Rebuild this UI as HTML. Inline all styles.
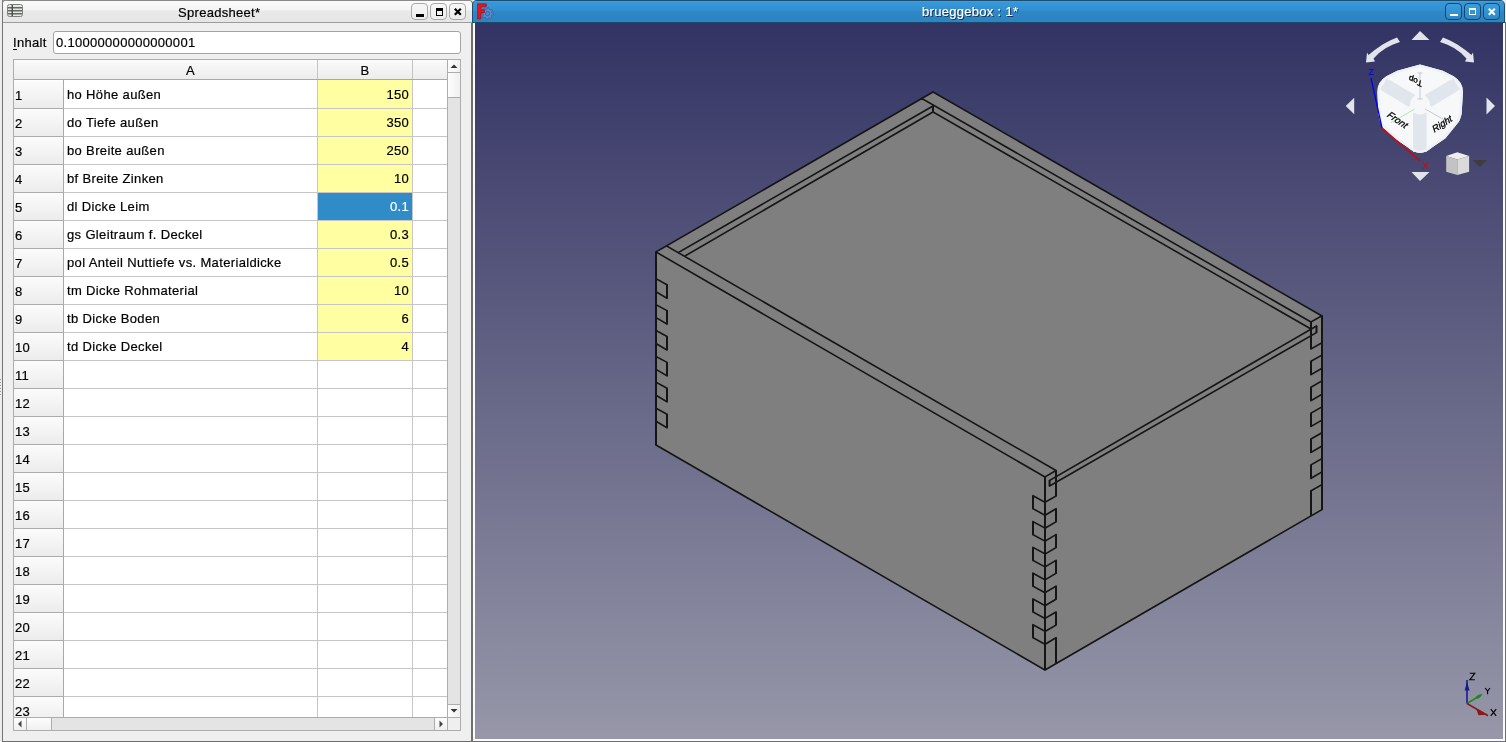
<!DOCTYPE html>
<html><head><meta charset="utf-8">
<style>
*{box-sizing:border-box}
html,body{margin:0;padding:0;width:1506px;height:742px;overflow:hidden;background:#ececec;font-family:"Liberation Sans",sans-serif;font-size:13px;letter-spacing:0.3px;color:#000}
.abs{position:absolute}
.ta,.rh,.yel,.sel,.ttl,.hdr{will-change:transform;-webkit-text-stroke:0.2px currentColor}
#sw{position:absolute;left:2px;top:0;width:471px;height:742px;background:#efefef;border-left:1px solid #747474;border-right:2px solid #6f6f6f;border-top:1px solid #8a8a8a;border-bottom:1px solid #6e6e6e;border-radius:4px 4px 0 0}
#stb{position:absolute;left:3px;top:1px;width:469px;height:22px;background:linear-gradient(#fbfbfb 0,#f4f4f4 9px,#e9e9e9 10px,#e6e6e6 100%);border-bottom:1px solid #9c9c9c;border-radius:3px 3px 0 0}
.ttl{position:absolute;white-space:pre}
.wbtn{position:absolute;top:3px;width:17px;height:17px;border:1px solid #a9a9a9;border-radius:4px;background:linear-gradient(#f7f7f7,#ececec)}
#inp{position:absolute;left:53px;top:31px;width:408px;height:23px;background:#fff;border:1px solid #a4a4a4;border-radius:3px}
#tbl{position:absolute;left:13px;top:59px;width:448px;height:672px;border:1px solid #adadad;background:#fff;overflow:hidden}
.hdr{position:absolute;top:60px;height:19px;background:linear-gradient(#fbfbfb,#ececec);text-align:center;line-height:19px;padding-top:1px}
.rh{position:absolute;left:14px;width:49px;height:28px;background:linear-gradient(#fbfbfb,#ececec);padding-left:1px;padding-top:8px;line-height:13px;border-top:1px solid #fdfdfd}
.hl{position:absolute;left:64px;width:383px;height:1px;background:#c6c6c6}.hl::before{content:'';position:absolute;left:-50px;top:0;width:50px;height:1px;background:#acacac}
.ta{position:absolute;left:67px;letter-spacing:0.35px;height:27px;padding-top:8px;line-height:13px;white-space:pre}
.yel,.sel{position:absolute;left:318px;width:94px;height:28px;background:#ffffa2;text-align:right;padding-right:3px;padding-top:8px;line-height:13px}
.sel{background:#308cc6;color:#fff}
.vl{position:absolute;top:60px;width:1px;height:657px;background:#c6c6c6}
</style></head><body>
<div class="abs grip" style="left:0;top:379px;width:1px;height:1px;background:#9a9a9a"></div><div class="abs grip" style="left:0;top:382px;width:1px;height:1px;background:#9a9a9a"></div><div class="abs grip" style="left:0;top:385px;width:1px;height:1px;background:#9a9a9a"></div><div class="abs grip" style="left:0;top:388px;width:1px;height:1px;background:#9a9a9a"></div><div class="abs grip" style="left:0;top:391px;width:1px;height:1px;background:#9a9a9a"></div><div class="abs grip" style="left:0;top:394px;width:1px;height:1px;background:#9a9a9a"></div>
<div class="abs cornerfix" style="left:2px;top:0;width:5px;height:5px;background:#8c8c8c"></div>
<div id="sw"></div>
<div id="stb"></div>
<!-- sheet icon -->
<svg class="abs" style="left:6px;top:3px" width="18" height="16" viewBox="0 0 18 16">
<rect x="1.5" y="1.5" width="15" height="12" rx="2" fill="#e6e8e4" stroke="#7d817d" stroke-width="1"/>
<rect x="2" y="4" width="14" height="1.5" fill="#646864"/>
<rect x="2" y="7" width="14" height="1.5" fill="#646864"/>
<rect x="2" y="10" width="14" height="1.5" fill="#646864"/>
<rect x="5.5" y="2" width="1.5" height="11" fill="#4e524e"/>
</svg>
<div class="ttl" style="left:178px;top:5px;font-size:13px;line-height:16px">Spreadsheet*</div>
<div class="wbtn" style="left:411px"><div class="abs" style="left:4px;top:10px;width:8px;height:3px;background:#000"></div></div>
<div class="wbtn" style="left:430px"><div class="abs" style="left:5px;top:4px;width:7px;height:8px;border:1px solid #000;border-top-width:3px;border-bottom-width:1.5px"></div></div>
<div class="wbtn" style="left:449px"><svg class="abs" style="left:3px;top:3px" width="10" height="10"><path d="M1.8 1.8L7.8 7.8M7.8 1.8L1.8 7.8" stroke="#000" stroke-width="2.2"/></svg></div>
<div class="ttl" style="left:13px;top:35px;line-height:16px">Inhalt</div>
<div class="abs" style="left:13px;top:49px;width:4px;height:1px;background:#000"></div>
<div id="inp"><div class="ttl" style="left:2px;top:3px;line-height:16px">0.10000000000000001</div></div>
<div id="tbl"></div>
<div class="hdr" style="left:14px;width:303px;padding-left:50px">A</div>
<div class="hdr" style="left:318px;width:94px">B</div>
<div class="hdr" style="left:413px;width:34px"></div>
<div class="abs" style="left:14px;top:79px;width:433px;height:1px;background:#a9a9a9"></div>
<div class="abs" style="left:317px;top:60px;width:1px;height:19px;background:#c4c4c4"></div>
<div class="abs" style="left:412px;top:60px;width:1px;height:19px;background:#c4c4c4"></div>
<div class="rh" style="top:80px">1</div>
<div class="ta" style="top:80px">ho Höhe außen</div>
<div class="yel" style="top:80px">150</div>
<div class="rh" style="top:108px">2</div>
<div class="ta" style="top:108px">do Tiefe außen</div>
<div class="yel" style="top:108px">350</div>
<div class="rh" style="top:136px">3</div>
<div class="ta" style="top:136px">bo Breite außen</div>
<div class="yel" style="top:136px">250</div>
<div class="rh" style="top:164px">4</div>
<div class="ta" style="top:164px">bf Breite Zinken</div>
<div class="yel" style="top:164px">10</div>
<div class="rh" style="top:192px">5</div>
<div class="ta" style="top:192px">dl Dicke Leim</div>
<div class="sel" style="top:192px">0.1</div>
<div class="rh" style="top:220px">6</div>
<div class="ta" style="top:220px">gs Gleitraum f. Deckel</div>
<div class="yel" style="top:220px">0.3</div>
<div class="rh" style="top:248px">7</div>
<div class="ta" style="top:248px">pol Anteil Nuttiefe vs. Materialdicke</div>
<div class="yel" style="top:248px">0.5</div>
<div class="rh" style="top:276px">8</div>
<div class="ta" style="top:276px">tm Dicke Rohmaterial</div>
<div class="yel" style="top:276px">10</div>
<div class="rh" style="top:304px">9</div>
<div class="ta" style="top:304px">tb Dicke Boden</div>
<div class="yel" style="top:304px">6</div>
<div class="rh" style="top:332px">10</div>
<div class="ta" style="top:332px">td Dicke Deckel</div>
<div class="yel" style="top:332px">4</div>
<div class="rh" style="top:360px">11</div>
<div class="rh" style="top:388px">12</div>
<div class="rh" style="top:416px">13</div>
<div class="rh" style="top:444px">14</div>
<div class="rh" style="top:472px">15</div>
<div class="rh" style="top:500px">16</div>
<div class="rh" style="top:528px">17</div>
<div class="rh" style="top:556px">18</div>
<div class="rh" style="top:584px">19</div>
<div class="rh" style="top:612px">20</div>
<div class="rh" style="top:640px">21</div>
<div class="rh" style="top:668px">22</div>
<div class="rh" style="top:696px">23</div>
<div class="hl" style="top:108px"></div>
<div class="hl" style="top:136px"></div>
<div class="hl" style="top:164px"></div>
<div class="hl" style="top:192px"></div>
<div class="hl" style="top:220px"></div>
<div class="hl" style="top:248px"></div>
<div class="hl" style="top:276px"></div>
<div class="hl" style="top:304px"></div>
<div class="hl" style="top:332px"></div>
<div class="hl" style="top:360px"></div>
<div class="hl" style="top:388px"></div>
<div class="hl" style="top:416px"></div>
<div class="hl" style="top:444px"></div>
<div class="hl" style="top:472px"></div>
<div class="hl" style="top:500px"></div>
<div class="hl" style="top:528px"></div>
<div class="hl" style="top:556px"></div>
<div class="hl" style="top:584px"></div>
<div class="hl" style="top:612px"></div>
<div class="hl" style="top:640px"></div>
<div class="hl" style="top:668px"></div>
<div class="hl" style="top:696px"></div>
<div class="hl" style="top:724px"></div><div class="abs" style="left:63px;top:80px;width:1px;height:637px;background:#a9a9a9"></div>
<div class="vl" style="left:317px;top:80px;height:637px"></div>
<div class="vl" style="left:412px;top:80px;height:637px"></div>
<!-- v scrollbar -->
<div class="abs" style="left:447px;top:59px;width:14px;height:659px;background:#e4e4e4;border:1px solid #adadad"></div>
<div class="abs" style="left:447px;top:59px;width:14px;height:14px;background:linear-gradient(90deg,#fdfdfd,#f0f0f0);border:1px solid #adadad"></div>
<svg class="abs" style="left:448px;top:60px" width="12" height="12"><path d="M2.5 8L6 4.5L9.5 8Z" fill="#333"/></svg>
<div class="abs" style="left:447px;top:72px;width:14px;height:26px;background:linear-gradient(90deg,#fdfdfd,#f0f0f0);border:1px solid #adadad"></div>
<div class="abs" style="left:447px;top:704px;width:14px;height:14px;background:linear-gradient(90deg,#fdfdfd,#f0f0f0);border:1px solid #adadad"></div>
<svg class="abs" style="left:448px;top:705px" width="12" height="12"><path d="M2.5 4L6 7.5L9.5 4Z" fill="#333"/></svg>
<!-- h scrollbar -->
<div class="abs" style="left:13px;top:717px;width:448px;height:14px;background:#e4e4e4;border:1px solid #adadad"></div>
<div class="abs" style="left:13px;top:717px;width:14px;height:14px;background:linear-gradient(#fdfdfd,#f0f0f0);border:1px solid #adadad"></div>
<svg class="abs" style="left:14px;top:718px" width="12" height="12"><path d="M7.5 2.5L4 6L7.5 9.5Z" fill="#444"/></svg>
<div class="abs" style="left:26px;top:717px;width:26px;height:14px;background:linear-gradient(#fdfdfd,#f0f0f0);border:1px solid #adadad"></div>
<div class="abs" style="left:434px;top:717px;width:14px;height:14px;background:linear-gradient(#fdfdfd,#f0f0f0);border:1px solid #adadad"></div>
<svg class="abs" style="left:435px;top:718px" width="12" height="12"><path d="M4.5 2.5L8 6L4.5 9.5Z" fill="#444"/></svg>
<div class="abs" style="left:447px;top:717px;width:14px;height:14px;background:#efefef;border:1px solid #adadad"></div>
<!-- 3D window -->
<div class="abs" style="left:473px;top:0;width:1033px;height:742px;background:#ececec"></div>
<div class="abs" style="left:473px;top:22px;width:1033px;height:720px;background:#fbfbfb;border-right:1px solid #6e6e6e;border-bottom:1px solid #6e6e6e"></div>
<div class="abs" style="left:472px;top:0;width:1033px;height:23px;border-radius:5px 5px 0 0;border-left:1px solid #1d4d70;border-right:1px solid #1d4d70;background:linear-gradient(#1d4d70 0,#1d4d70 1px,#3eaaf0 1px,#3598da 2px,#3290d2 10px,#2e86c4 12px,#2d84c2 22px,#1a4a6c 22px)"></div>
<div class="abs" style="left:475px;top:23px;width:1028px;height:716px;background:linear-gradient(#333364,#9797a9)"></div>
<div class="ttl" style="left:923px;top:5px;line-height:16px;color:#1b3550">brueggebox : 1*</div>
<div class="ttl" style="left:922px;top:4px;line-height:16px;color:#fff">brueggebox : 1*</div>
<svg class="abs" style="left:0;top:0" width="1506" height="742" viewBox="0 0 1506 742">
<polygon points="656.0,252.0 933.0,92.0 1322.0,316.0 1322.0,509.5 1045.0,670.0 656.0,445.0" fill="#7f7f7f"/>
<path d="M656.0,252.0 L933.0,92.0 M933.0,92.0 L1322.0,316.0 M1322.0,509.5 L1045.0,670.0 M1045.0,670.0 L656.0,445.0 M656.0,252.0 L1045.0,477.0 M667.0,246.2 L1056.0,470.5 M1045.0,477.0 L1056.0,470.5 M1056.0,496.0 L1045.0,502.3 M679.0,252.2 L933.0,106.0 M685.0,256.0 L933.0,112.0 M921.8,98.5 L1311.0,322.0 M1311.0,322.0 L1322.0,315.8 M933.0,112.0 L1311.0,329.0 M1311.0,349.0 L1322.0,342.7 M1049.6,480.5 L1316.5,326.0 M1316.5,332.5 L1049.6,486.0 M656.0,278.7 L667.0,284.7 M667.0,298.2 L656.0,291.7 M656.0,304.6 L667.0,310.6 M667.0,324.1 L656.0,317.6 M656.0,330.5 L667.0,336.5 M667.0,350.0 L656.0,343.5 M656.0,356.4 L667.0,362.4 M667.0,375.9 L656.0,369.4 M656.0,382.3 L667.0,388.3 M667.0,401.8 L656.0,395.3 M656.0,408.2 L667.0,414.2 M667.0,427.7 L656.0,421.2 M1045.0,502.3 L1033.0,495.8 M1033.0,508.8 L1045.0,515.3 M1045.0,528.1 L1033.0,521.6 M1033.0,534.6 L1045.0,541.1 M1045.0,553.9 L1033.0,547.4 M1033.0,560.4 L1045.0,566.9 M1045.0,579.7 L1033.0,573.2 M1033.0,586.2 L1045.0,592.7 M1045.0,605.5 L1033.0,599.0 M1033.0,612.0 L1045.0,618.5 M1045.0,631.3 L1033.0,624.8 M1033.0,637.8 L1045.0,644.3 M1045.0,515.3 L1056.0,508.8 M1056.0,521.8 L1045.0,528.3 M1045.0,541.1 L1056.0,534.6 M1056.0,547.6 L1045.0,554.1 M1045.0,566.9 L1056.0,560.4 M1056.0,573.4 L1045.0,579.9 M1045.0,592.7 L1056.0,586.2 M1056.0,599.2 L1045.0,605.7 M1045.0,618.5 L1056.0,612.0 M1056.0,625.0 L1045.0,631.5 M1045.0,644.3 L1056.0,637.8 M1322.0,355.0 L1311.0,361.3 M1311.0,374.7 L1322.0,368.3 M1322.0,380.9 L1311.0,387.2 M1311.0,400.6 L1322.0,394.2 M1322.0,406.8 L1311.0,413.1 M1311.0,426.5 L1322.0,420.1 M1322.0,432.7 L1311.0,439.0 M1311.0,452.4 L1322.0,446.0 M1322.0,458.6 L1311.0,464.9 M1311.0,478.3 L1322.0,471.9 M1322.0,484.5 L1311.0,490.8" fill="none" stroke="#151515" stroke-width="1.6" stroke-linecap="square"/>
<path d="M656.0,445.0 L656.0,252.0 M1322.0,316.0 L1322.0,509.5 M1045.0,477.0 L1045.0,670.0 M1056.0,470.5 L1056.0,496.0 M933.0,106.0 L933.0,112.0 M1311.0,322.0 L1311.0,349.0 M1049.6,486.0 L1049.6,480.5 M1316.5,326.0 L1316.5,332.5 M667.0,284.7 L667.0,298.2 M667.0,310.6 L667.0,324.1 M667.0,336.5 L667.0,350.0 M667.0,362.4 L667.0,375.9 M667.0,388.3 L667.0,401.8 M667.0,414.2 L667.0,427.7 M1033.0,495.8 L1033.0,508.8 M1033.0,521.6 L1033.0,534.6 M1033.0,547.4 L1033.0,560.4 M1033.0,573.2 L1033.0,586.2 M1033.0,599.0 L1033.0,612.0 M1033.0,624.8 L1033.0,637.8 M1056.0,508.8 L1056.0,521.8 M1056.0,534.6 L1056.0,547.6 M1056.0,560.4 L1056.0,573.4 M1056.0,586.2 L1056.0,599.2 M1056.0,612.0 L1056.0,625.0 M1056.0,637.8 L1056.0,663.6 M1311.0,361.3 L1311.0,374.7 M1311.0,387.2 L1311.0,400.6 M1311.0,413.1 L1311.0,426.5 M1311.0,439.0 L1311.0,452.4 M1311.0,464.9 L1311.0,478.3 M1311.0,490.8 L1311.0,516.0" fill="none" stroke="#151515" stroke-width="2" stroke-linecap="butt"/>
</svg><svg class="abs" style="left:1330px;top:24px" width="176" height="170" viewBox="1330 24 176 170">
<g fill="#e1e5eb">
<polygon points="1420,31 1411.5,40 1429.5,40"/>
<polygon points="1420,181 1411.5,172 1429.5,172"/>
<polygon points="1345.7,106 1354.2,97.8 1354.2,114.3"/>
<polygon points="1495,106 1486.5,97.4 1486.5,114.6"/>
<polygon points="1397,37.5 1390,40.5 1382.6,44.5 1374,50.5 1368.5,55 1367,52.5 1366,62.5 1375,61.5 1373.5,58.5 1379,53 1386,48 1393,44.5 1400,42"/>
<polygon points="1443,37.5 1450,40.5 1457.4,44.5 1466,50.5 1471.5,55 1473,52.5 1474,62.5 1465,61.5 1466.5,58.5 1461,53 1454,48 1447,44.5 1440,42"/>
</g>
<!-- cube body -->
<path d="M1420,64.5 L1442.8,70.8 L1453.6,76.2 Q1463,82 1463,92 L1461.6,114 Q1460,121 1457.6,123.3 L1445.5,138.2 L1432,147.6 Q1426,153 1420,153 Q1414,153 1408,147.6 L1394.5,138.2 L1382.8,127.4 Q1379.5,122 1378.4,114 L1377.4,92 Q1377,82 1386.4,76.2 L1397.2,70.8 Z" fill="#f7f8fa"/>
<polygon points="1386.8,78.2 1415,95 1409,107 1380,89.6" fill="#e1e6ec"/>
<polygon points="1453.2,78.2 1425,95 1431,107 1460,89.6" fill="#e1e6ec"/>
<rect x="1413" y="113" width="13.6" height="39" fill="#e1e6ec"/>
<circle cx="1420" cy="104.5" r="10" fill="#f6f7f9"/>
<path d="M1420,64.5 L1442.8,70.8 L1453.6,76.2 Q1463,82 1463,92 L1461.6,114 Q1460,121 1457.6,123.3 L1445.5,138.2 L1432,147.6 Q1426,153 1420,153 Q1414,153 1408,147.6 L1394.5,138.2 L1382.8,127.4 Q1379.5,122 1378.4,114 L1377.4,92 Q1377,82 1386.4,76.2 L1397.2,70.8 Z" fill="none" stroke="#eef1f5" stroke-width="5" clip-path="url(#cc)"/>
<clipPath id="cc"><path d="M1420,64.5 L1442.8,70.8 L1453.6,76.2 Q1463,82 1463,92 L1461.6,114 Q1460,121 1457.6,123.3 L1445.5,138.2 L1432,147.6 Q1426,153 1420,153 Q1414,153 1408,147.6 L1394.5,138.2 L1382.8,127.4 Q1379.5,122 1378.4,114 L1377.4,92 Q1377,82 1386.4,76.2 L1397.2,70.8 Z"/></clipPath>
<g stroke="#c9c9d3" stroke-width="1" fill="none">
<path d="M1420,72.8 V99 M1417.5,73 H1422.5 M1417.5,99 H1422.5"/>
<path d="M1425,109 L1449.5,122.7"/>
</g>
<path d="M1414.5,109.2 L1391,122.7" stroke="#b8e8b0" stroke-width="1" fill="none"/>
<!-- cube labels -->
<text x="0" y="0" font-family="Liberation Sans" font-size="8.5" font-style="italic" fill="#000" stroke="#000" stroke-width="0.35" transform="translate(1410,75.5) rotate(26) scale(1,-0.9)" letter-spacing="0">qoT</text>
<text x="0" y="0" font-family="Liberation Sans" font-size="9.5" fill="#000" stroke="#000" stroke-width="0.3" transform="translate(1386,116) rotate(34) skewX(-15)" letter-spacing="0">Front</text>
<text x="0" y="0" font-family="Liberation Sans" font-size="9.5" fill="#000" stroke="#000" stroke-width="0.3" transform="translate(1434,133) rotate(-33) skewX(-15)" letter-spacing="0">Right</text>
<!-- axes -->
<path d="M1382,128 L1371,78" stroke="#0000ee" stroke-width="1.3" fill="none"/>
<path d="M1382,128 L1420,161" stroke="#dd0000" stroke-width="1.3" fill="none"/>
<text x="1368.5" y="75" font-family="Liberation Sans" font-size="9" fill="#0000ee" letter-spacing="0">Z</text>
<text x="1422.5" y="169" font-family="Liberation Sans" font-size="9" fill="#dd0000" letter-spacing="0">X</text>
<!-- small cube -->
<polygon points="1457.3,152.3 1469.1,156 1457.3,159.6 1446.2,156" fill="#eeeeee"/>
<polygon points="1446.2,156 1457.3,159.6 1457.3,174.9 1446.2,171.7" fill="#c3c3c3"/>
<polygon points="1469.1,156 1457.3,159.6 1457.3,174.9 1469.1,171.7" fill="#dadada"/>
<polygon points="1472.9,160.1 1486.9,160.1 1479.9,167.1" fill="#3d3d3d"/>
</svg>
<!-- axis indicator -->
<svg class="abs" style="left:1450px;top:665px" width="56" height="60" viewBox="1450 665 56 60">
<path d="M1467,703.5 V680" stroke="#1a1a90" stroke-width="1.6"/>
<path d="M1464.6,690.5 L1467,682 L1469.6,690.5 Z" fill="#1a1a90"/>
<path d="M1467,703.5 L1482,694.3" stroke="#1a8a1a" stroke-width="1.5"/>
<ellipse cx="1478.4" cy="696.6" rx="3" ry="1.6" transform="rotate(-31 1478.4 696.6)" fill="#1a8a1a"/>
<path d="M1467,703.5 L1488,715.7" stroke="#8a1a1a" stroke-width="1.6"/>
<path d="M1477.5,710 L1485,714.2 L1479,714.5 Z" fill="#8a1a1a" stroke="#8a1a1a" stroke-width="1.5"/>
<g stroke="#000" stroke-width="1.1" fill="none">
<path d="M1469.8,673.3 H1474.8 L1469.8,679.8 H1474.8"/>
<path d="M1485.2,688 L1487.6,691 L1490,688 M1487.6,691 V694.3"/>
<path d="M1490.8,709.2 L1496.2,715.8 M1496.2,709.2 L1490.8,715.8"/>
</g>
</svg>
<!-- FreeCAD icon -->
<svg class="abs" style="left:474px;top:1px" width="22" height="21" viewBox="474 1 22 21">
<path d="M487.60,7.60 L488.77,7.72 L489.28,9.53 L490.04,9.94 L491.84,9.36 L492.59,10.27 L491.67,11.92 L491.92,12.74 L493.60,13.60 L493.48,14.77 L491.67,15.28 L491.26,16.04 L491.84,17.84 L490.93,18.59 L489.28,17.67 L488.46,17.92 L487.60,19.60 L486.43,19.48 L485.92,17.67 L485.16,17.26 L483.36,17.84 L482.61,16.93 L483.53,15.28 L483.28,14.46 L481.60,13.60 L481.72,12.43 L483.53,11.92 L483.94,11.16 L483.36,9.36 L484.27,8.61 L485.92,9.53 L486.74,9.28Z" fill="#5d88c8" stroke="#3b5f9c" stroke-width="0.7"/><circle cx="487.6" cy="13.6" r="2.1" fill="#3592d4" stroke="#3b5f9c" stroke-width="0.8"/>
<path d="M477.6,3.8 H486.3 V6.8 H480.9 V9.7 H484.4 V12.7 H480.9 V18.9 H477.6 Z" fill="#e8161c" stroke="#8a0a10" stroke-width="0.6"/>
</svg>
<!-- 3D window buttons -->
<div class="abs" style="left:1445px;top:3px;width:17px;height:17px;border:1px solid #1a4565;border-radius:4px;background:linear-gradient(#3a9de0,#2f88c6)"><div class="abs" style="left:4px;top:10px;width:8px;height:2px;background:#fff"></div></div>
<div class="abs" style="left:1464px;top:3px;width:17px;height:17px;border:1px solid #1a4565;border-radius:4px;background:linear-gradient(#3a9de0,#2f88c6)"><div class="abs" style="left:4px;top:4px;width:7px;height:7px;border:1px solid #fff;border-top-width:2px"></div></div>
<div class="abs" style="left:1483px;top:3px;width:17px;height:17px;border:1px solid #1a4565;border-radius:4px;background:linear-gradient(#3a9de0,#2f88c6)"><svg class="abs" style="left:3px;top:3px" width="10" height="10"><path d="M1.8 1.8L7.8 7.8M7.8 1.8L1.8 7.8" stroke="#fff" stroke-width="2"/></svg></div>
</body></html>
